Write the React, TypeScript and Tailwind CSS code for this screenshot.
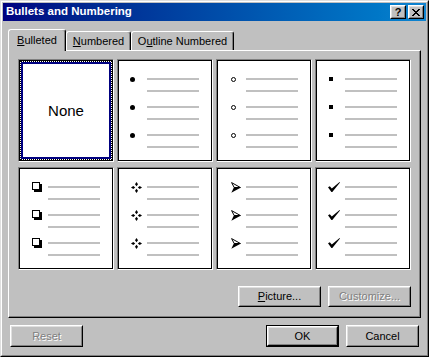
import React from "react";

const FONT = "font-['Liberation_Sans',Arial,sans-serif]";

function Raised({ className = "", children }: { className?: string; children?: React.ReactNode }) {
  return (
    <div className={`border border-t-white border-l-white border-r-black border-b-black bg-[#c0c0c0] ${className}`}>
      <div className="flex h-full w-full items-center justify-center border border-t-[#dfdfdf] border-l-[#dfdfdf] border-r-[#808080] border-b-[#808080]">
        {children}
      </div>
    </div>
  );
}

function Btn({
  size,
  children,
  disabled,
  def,
}: {
  size: string;
  children: React.ReactNode;
  disabled?: boolean;
  def?: boolean;
}) {
  const text = (
    <span
      className={`text-[11px] leading-none ${
        disabled ? "text-[#808080] [text-shadow:1px_1px_0_#ffffff]" : "text-black"
      }`}
    >
      {children}
    </span>
  );
  if (def) {
    return (
      <div className={`flex border border-black ${size}`}>
        <Raised className="flex-1">{text}</Raised>
      </div>
    );
  }
  return <Raised className={size}>{text}</Raised>;
}

const Dot = () => (
  <svg width="5" height="5" viewBox="0 0 5 5">
    <circle cx="2.5" cy="2.5" r="2.5" fill="#000" />
  </svg>
);
const Ring = () => (
  <svg width="5" height="5" viewBox="0 0 5 5">
    <circle cx="2.5" cy="2.5" r="2" fill="none" stroke="#000" strokeWidth="1" />
  </svg>
);
const Sq = () => (
  <svg width="4" height="4" viewBox="0 0 4 4">
    <rect x="0" y="0" width="4" height="4" fill="#000" />
  </svg>
);
const ShadowBox = () => (
  <svg width="10" height="10" viewBox="0 0 10 10" shapeRendering="crispEdges">
    <rect x="0.5" y="0.5" width="7" height="7" fill="#fff" stroke="#000" strokeWidth="1" />
    <rect x="2" y="8" width="8" height="2" fill="#000" />
    <rect x="8" y="2" width="2" height="8" fill="#000" />
  </svg>
);
const Diamonds = () => (
  <svg width="11" height="11" viewBox="0 0 11 11">
    <path d="M5.5 0 L7 2.3 L5.5 4.2 L4 2.3 Z" fill="#000" />
    <path d="M5.5 6.8 L7 8.7 L5.5 11 L4 8.7 Z" fill="#000" />
    <path d="M0 5.5 L2.3 4 L4.2 5.5 L2.3 7 Z" fill="#000" />
    <path d="M6.8 5.5 L8.7 4 L11 5.5 L8.7 7 Z" fill="#000" />
  </svg>
);
const Arrow = () => (
  <svg width="10" height="11" viewBox="0 0 10 11">
    <path d="M0.6 0.6 L9.4 5.5 L3.2 5.5 Z" fill="#fff" stroke="#000" strokeWidth="1" strokeLinejoin="round" />
    <path d="M3 5.2 L10 5.5 L0.3 10.8 Z" fill="#000" />
  </svg>
);
const Check = () => (
  <svg width="12" height="10" viewBox="0 0 12 10">
    <path d="M0 5.2 L1.8 4.2 L3.8 6.6 L11.6 0 L12 0.5 L4.3 10 L3.4 10 Z" fill="#000" />
  </svg>
);

function Group({ bullet, pl }: { bullet: React.ReactNode; pl: string }) {
  return (
    <div className="flex flex-col">
      <div className="flex h-[12px] items-center">
        <div className={`flex w-[28px] shrink-0 items-center ${pl}`}>{bullet}</div>
        <div className="h-[2px] w-[52px] bg-[#c0c0c0]" />
      </div>
      <div className="ml-[28px] mt-[5px] h-[2px] w-[52px] bg-[#c0c0c0]" />
    </div>
  );
}

function BulletCard({ bullet, pl }: { bullet: React.ReactNode; pl: string }) {
  return (
    <div className="h-[103px] border border-t-[#808080] border-l-[#808080] border-b-white border-r-white">
      <div className="flex h-full flex-col gap-[9px] border border-black bg-white pt-[12px]">
        <Group bullet={bullet} pl={pl} />
        <Group bullet={bullet} pl={pl} />
        <Group bullet={bullet} pl={pl} />
      </div>
    </div>
  );
}

function NoneCard() {
  return (
    <div className="h-[103px] border border-t-[#808080] border-l-[#808080] border-b-white border-r-white">
      <div className="h-full border border-black bg-white">
        <div className="h-full border border-dotted border-black bg-white">
          <div className="flex h-full items-center justify-center border-2 border-[#000080] bg-white">
            <span className="text-[15px] leading-none text-black">None</span>
          </div>
        </div>
      </div>
    </div>
  );
}

export default function App() {
  return (
    <div className={`${FONT} h-[357px] w-[429px] select-none`}>
      <div className="h-full w-full border border-t-[#dfdfdf] border-l-[#dfdfdf] border-r-black border-b-black bg-[#c0c0c0]">
        <div className="flex h-full w-full flex-col border border-t-white border-l-white border-r-[#808080] border-b-[#808080] p-px">
          {/* title bar */}
          <div className="flex h-[18px] shrink-0 items-center bg-gradient-to-r from-[#000080] to-[#1084d0] pl-[3px] pr-[2px]">
            <span className="flex-1 text-[11.5px] font-bold leading-none text-white">Bullets and Numbering</span>
            <Raised className="h-[14px] w-[16px]">
              <span className="text-[11px] font-bold leading-none text-black">?</span>
            </Raised>
            <Raised className="ml-[2px] h-[14px] w-[16px]">
              <svg width="8" height="7" viewBox="0 0 8 7" shapeRendering="crispEdges">
                <path d="M0 0h2v1h-2zM6 0h2v1h-2zM1 1h2v1h-2zM5 1h2v1h-2zM2 2h4v1h-4zM3 3h2v1h-2zM2 4h4v1h-4zM1 5h2v1h-2zM5 5h2v1h-2zM0 6h2v1h-2zM6 6h2v1h-2z" fill="#000" />
              </svg>
            </Raised>
          </div>

          {/* body */}
          <div className="flex flex-1 flex-col px-[7px] pb-[7px] pt-[8px]">
            {/* tabs */}
            <div className="relative z-10 -mx-[2px] flex h-[22px] items-end text-[11px] text-black">
              <div className="flex h-[22px] w-[58px] items-start justify-center rounded-t-[3px] border-l border-r border-t border-l-white border-r-black border-t-white bg-[#c0c0c0] pt-[5px] shadow-[inset_-1px_0_0_#808080]">
                <span className="leading-none">
                  <span className="underline underline-offset-1">B</span>ulleted
                </span>
              </div>
              <div className="mb-px flex h-[19px] w-[65px] items-start justify-center rounded-t-[3px] border-l border-r border-t border-l-white border-r-black border-t-white pt-[4px] shadow-[inset_-1px_0_0_#808080]">
                <span className="leading-none">
                  <span className="underline underline-offset-1">N</span>umbered
                </span>
              </div>
              <div className="mb-px flex h-[19px] w-[103px] items-start justify-center rounded-t-[3px] border-l border-r border-t border-l-white border-r-black border-t-white pt-[4px] shadow-[inset_-1px_0_0_#808080]">
                <span className="leading-none">
                  O<span className="underline underline-offset-1">u</span>tline Numbered
                </span>
              </div>
            </div>

            {/* panel */}
            <div className="-mx-[2px] -mt-px flex h-[268px] flex-col border border-t-white border-l-white border-r-black border-b-black px-[9px] pb-[10px] pt-[8px] shadow-[inset_-1px_-1px_0_#808080]">
              <div className="grid grid-cols-[repeat(4,96px)] gap-x-[3px] gap-y-[5px]">
                <NoneCard />
                <BulletCard bullet={<Dot />} pl="pl-[11px]" />
                <BulletCard bullet={<Ring />} pl="pl-[13px]" />
                <BulletCard bullet={<Sq />} pl="pl-[12px]" />
                <BulletCard bullet={<ShadowBox />} pl="pl-[12px]" />
                <BulletCard bullet={<Diamonds />} pl="pl-[12px]" />
                <BulletCard bullet={<Arrow />} pl="pl-[13px]" />
                <BulletCard bullet={<Check />} pl="pl-[11px]" />
              </div>
              <div className="mt-[16px] flex justify-end gap-[7px]">
                <Btn size="h-[21px] w-[83px]">
                  <span className="underline underline-offset-1">P</span>icture...
                </Btn>
                <Btn size="h-[21px] w-[83px]" disabled>
                  Customize...
                </Btn>
              </div>
            </div>

            {/* bottom buttons */}
            <div className="mt-[7px] flex gap-[7px]">
              <Btn size="h-[22px] w-[73px]" disabled>
                Reset
              </Btn>
              <div className="flex-1" />
              <Btn size="h-[22px] w-[73px]" def>
                OK
              </Btn>
              <Btn size="h-[22px] w-[73px]">Cancel</Btn>
            </div>
          </div>
        </div>
      </div>
    </div>
  );
}
